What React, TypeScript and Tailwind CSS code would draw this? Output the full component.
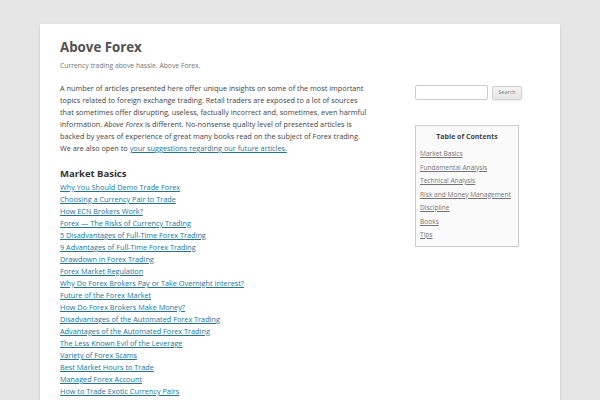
const articles = [
  "Why You Should Demo Trade Forex",
  "Choosing a Currency Pair to Trade",
  "How ECN Brokers Work?",
  "Forex — The Risks of Currency Trading",
  "5 Disadvantages of Full-Time Forex Trading",
  "9 Advantages of Full-Time Forex Trading",
  "Drawdown in Forex Trading",
  "Forex Market Regulation",
  "Why Do Forex Brokers Pay or Take Overnight Interest?",
  "Future of the Forex Market",
  "How Do Forex Brokers Make Money?",
  "Disadvantages of the Automated Forex Trading",
  "Advantages of the Automated Forex Trading",
  "The Less Known Evil of the Leverage",
  "Variety of Forex Scams",
  "Best Market Hours to Trade",
  "Managed Forex Account",
  "How to Trade Exotic Currency Pairs",
];

const toc = [
  "Market Basics",
  "Fundamental Analysis",
  "Technical Analysis",
  "Risk and Money Management",
  "Discipline",
  "Books",
  "Tips",
];

export default function App() {
  return (
    <div className="h-[400px] overflow-hidden bg-[#e6e6e6] pt-[24px] font-['Open_Sans',sans-serif]">
      <div className="mx-auto h-[376px] w-[520px] bg-white px-[20px] shadow-[0_1px_2px_rgba(100,100,100,0.3)]">
        {/* header */}
        <header className="pt-[12px]">
          <h1 className="text-[13.3px] font-bold leading-[22px] text-[#515151]">Above Forex</h1>
          <p className="mt-[2px] text-[6.8px] leading-[12px] text-[#757575]">
            Currency trading above hassle. Above Forex.
          </p>
        </header>

        <div className="mt-[10px] flex justify-between">
          {/* main column */}
          <main className="w-[312px]">
            <p className="text-[7.3px] leading-[12px] text-[#444]">
              A number of articles presented here offer unique insights on some of the most important
              topics related to foreign exchange trading. Retail traders are exposed to a lot of sources
              that sometimes offer disrupting, useless, factually incorrect and, sometimes, even harmful
              information. <em>Above Forex</em> is different. No-nonsense quality level of presented articles is
              backed by years of experience of great many books read on the subject of Forex trading.
              We are also open to{" "}
              <a href="#" className="text-[#21759b] underline">
                your suggestions regarding our future articles.
              </a>
            </p>
            <h2 className="mt-[13px] text-[9.5px] font-bold leading-[14px] text-[#333]">Market Basics</h2>
            <ul>
              {articles.map((a) => (
                <li key={a} className="text-[7.3px] leading-[12px]">
                  <a href="#" className="text-[#21759b] underline">
                    {a}
                  </a>
                </li>
              ))}
            </ul>
          </main>

          {/* sidebar */}
          <aside className="w-[125px]">
            <div className="mt-[3px] flex items-center gap-[4px]">
              <input
                type="text"
                className="h-[15px] w-[73px] rounded-[2px] border border-[#ccc] bg-white"
              />
              <button className="h-[14px] w-[30px] rounded-[2px] border border-[#d2d2d2] bg-gradient-to-b from-[#f4f4f4] to-[#e6e6e6] text-[5.5px] text-[#7c7c7c] shadow-[0_1px_2px_rgba(64,64,64,0.1)]">
                Search
              </button>
            </div>
            <div className="mt-[25px] w-[104px] border border-[#ccc] bg-[#fafafa] px-[4px] pb-[4px] pt-[5px]">
              <h3 className="text-center text-[7px] font-bold leading-[12px] text-[#444]">Table of Contents</h3>
              <ul className="mt-[4px]">
                {toc.map((t) => (
                  <li key={t} className="whitespace-nowrap text-[6.6px] leading-[13.5px]">
                    <a href="#" className="text-[#757575] underline">
                      {t}
                    </a>
                  </li>
                ))}
              </ul>
            </div>
          </aside>
        </div>
      </div>
    </div>
  );
}
